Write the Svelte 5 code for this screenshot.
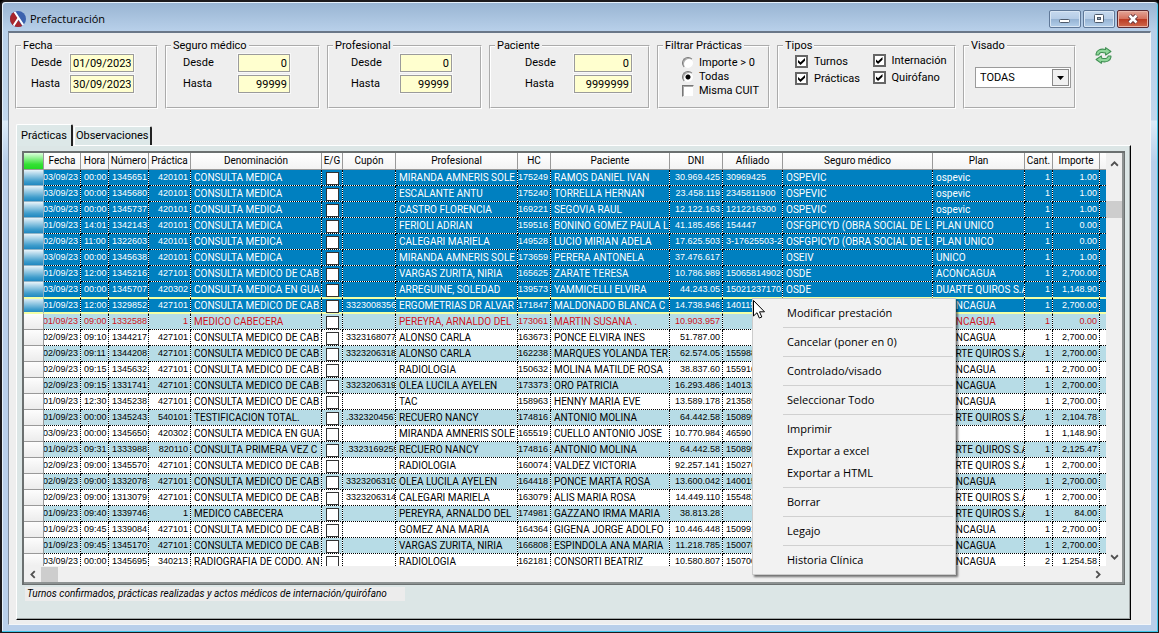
<script>
  const columns = [
    { key: 'fecha', title: 'Fecha', width: 37, kind: 'num date' },
    { key: 'hora', title: 'Hora', width: 28, kind: 'num' },
    { key: 'numero', title: 'Número', width: 40, kind: 'num' },
    { key: 'practica', title: 'Práctica', width: 42, kind: 'num end' },
    { key: 'denominacion', title: 'Denominación', width: 131, kind: 'text' },
    { key: 'eg', title: 'E/G', width: 21, kind: 'check' },
    { key: 'cupon', title: 'Cupón', width: 53, kind: 'num' },
    { key: 'profesional', title: 'Profesional', width: 122, kind: 'text' },
    { key: 'hc', title: 'HC', width: 33, kind: 'num end' },
    { key: 'paciente', title: 'Paciente', width: 119, kind: 'text' },
    { key: 'dni', title: 'DNI', width: 53, kind: 'num end' },
    { key: 'afiliado', title: 'Afiliado', width: 60, kind: 'num' },
    { key: 'seguro', title: 'Seguro médico', width: 150, kind: 'text' },
    { key: 'plan', title: 'Plan', width: 92, kind: 'text' },
    { key: 'cant', title: 'Cant.', width: 28, kind: 'num end' },
    { key: 'importe', title: 'Importe', width: 47, kind: 'num end' }
  ];

  const source = `
03/09/23|00:00|1345651|420101|CONSULTA MEDICA|||MIRANDA AMNERIS SOLE|175249|RAMOS DANIEL IVAN|30.969.425|30969425|OSPEVIC|ospevic|1|1.00
03/09/23|00:00|1345680|420101|CONSULTA MEDICA|||ESCALANTE ANTU|175240|TORRELLA HERNAN|23.458.119|2345811900|OSPEVIC|ospevic|1|1.00
03/09/23|00:00|1345737|420101|CONSULTA MEDICA|||CASTRO FLORENCIA|169221|SEGOVIA RAUL|12.122.163|1212216300|OSPEVIC|ospevic|1|1.00
01/09/23|14:01|1342143|420101|CONSULTA MEDICA|||FERIOLI ADRIAN|159516|BONINO GOMEZ PAULA L|41.185.456|154447|OSFGPICYD (OBRA SOCIAL DE L|PLAN UNICO|1|0.00
02/09/23|11:00|1322603|420101|CONSULTA MEDICA|||CALEGARI MARIELA|149528|LUCIO MIRIAN ADELA|17.625.503|3-17625503-2|OSFGPICYD (OBRA SOCIAL DE L|PLAN UNICO|1|0.00
03/09/23|00:00|1345638|420101|CONSULTA MEDICA|||MIRANDA AMNERIS SOLE|173659|PERERA ANTONELA|37.476.617||OSEIV|UNICO|1|1.00
01/09/23|12:00|1345216|427101|CONSULTA MEDICO DE CAB|||VARGAS ZURITA, NIRIA|165625|ZARATE TERESA|10.786.989|150658149020|OSDE|ACONCAGUA|1|2,700.00
03/09/23|00:00|1345707|420302|CONSULTA MEDICA EN GUA|||ARREGUINE, SOLEDAD|139573|YAMMICELLI ELVIRA|44.243.05|1502123717026|OSDE|DUARTE QUIROS S.A|1|1,148.90
01/09/23|12:00|1329852|427101|CONSULTA MEDICO DE CAB||3323008356|ERGOMETRIAS DR ALVAR|171847|MALDONADO BLANCA C|14.738.946|140115||ACONCAGUA|1|2,700.00
01/09/23|09:00|1332588|1|MEDICO CABECERA|||PEREYRA, ARNALDO DEL|173061|MARTIN SUSANA .|10.903.957|||ACONCAGUA|1|0.00
02/09/23|09:10|1344217|427101|CONSULTA MEDICO DE CAB||3323168077|ALONSO CARLA|163673|PONCE ELVIRA INES|51.787.00|||ACONCAGUA|1|2,700.00
02/09/23|09:11|1344208|427101|CONSULTA MEDICO DE CAB||3323206318|ALONSO CARLA|162238|MARQUES YOLANDA TER|62.574.05|155988||DUARTE QUIROS S.A|1|2,700.00
02/09/23|09:15|1345632|427101|CONSULTA MEDICO DE CAB|||RADIOLOGIA|150632|MOLINA MATILDE ROSA|38.837.60|155916||ACONCAGUA|1|2,700.00
02/09/23|09:15|1331741|427101|CONSULTA MEDICO DE CAB||3323206319|OLEA LUCILA AYELEN|173373|ORO PATRICIA|16.293.486|140132||ACONCAGUA|1|2,700.00
01/09/23|12:30|1345238|427101|CONSULTA MEDICO DE CAB|||TAC|158963|HENNY MARIA EVE|13.589.178|213589||ACONCAGUA|1|2,700.00
01/09/23|00:00|1345243|540101|TESTIFICACION TOTAL.||.3323204567|RECUERO NANCY|174816|ANTONIO MOLINA|64.442.58|150899||DUARTE QUIROS S.A|1|2,104.78
03/09/23|00:00|1345650|420302|CONSULTA MEDICA EN GUA|||MIRANDA AMNERIS SOLE|165519|CUELLO ANTONIO JOSE|10.770.984|46590|||1|1,148.90
01/09/23|09:31|1333988|820110|CONSULTA PRIMERA VEZ C||.3323169259|RECUERO NANCY|174816|ANTONIO MOLINA|64.442.58|150899||DUARTE QUIROS S.A|1|2,125.47
02/09/23|09:00|1345570|427101|CONSULTA MEDICO DE CAB|||RADIOLOGIA|160074|VALDEZ VICTORIA|92.257.141|150276||DUARTE QUIROS S.A|1|2,700.00
02/09/23|09:00|1332078|427101|CONSULTA MEDICO DE CAB||3323206310|OLEA LUCILA AYELEN|164418|PONCE MARTA ROSA|13.600.042|140015||ACONCAGUA|1|2,700.00
02/09/23|09:00|1313079|427101|CONSULTA MEDICO DE CAB||3323206314|CALEGARI MARIELA|163079|ALIS MARIA ROSA|14.449.110|155482||DUARTE QUIROS S.A|1|2,700.00
01/09/23|09:40|1339746|1|MEDICO CABECERA|||PEREYRA, ARNALDO DEL|174981|GAZZANO IRMA MARIA|38.813.28|||DUARTE QUIROS S.A|1|84.00
01/09/23|09:45|1339084|427101|CONSULTA MEDICO DE CAB|||GOMEZ ANA MARIA|164364|GIGENA JORGE ADOLFO|10.446.448|150991||ACONCAGUA|1|2,700.00
01/09/23|09:45|1345170|427101|CONSULTA MEDICO DE CAB|||VARGAS ZURITA, NIRIA|166808|ESPINDOLA ANA MARIA|11.218.785|150078||ACONCAGUA|1|2,700.00
03/09/23|00:00|1345695|340213|RADIOGRAFIA DE CODO. AN|||RADIOLOGIA|162181|CONSORTI BEATRIZ|10.580.807|150700||ACONCAGUA|2|1.254.58`;

  const rows = source.trim().split('\n').map((line) => line.split('|'));
  const current = 8;

  const ranges = [
    { id: 'seguro', title: 'Seguro médico', from: '0', to: '99999' },
    { id: 'profesional', title: 'Profesional', from: '0', to: '99999' },
    { id: 'paciente', title: 'Paciente', from: '0', to: '9999999' }
  ];

  const menu = [
    ['Modificar prestación'],
    ['Cancelar (poner en 0)'],
    ['Controlado/visado'],
    ['Seleccionar Todo'],
    ['Imprimir', 'Exportar a excel', 'Exportar a HTML'],
    ['Borrar'],
    ['Legajo'],
    ['Historia Clínica']
  ];
</script>

<div class="window">
  <header class="titlebar">
    <svg class="logo" viewBox="0 0 16 16" aria-hidden="true">
      <defs><clipPath id="disc"><circle cx="8" cy="8" r="8" /></clipPath></defs>
      <g clip-path="url(#disc)">
        <rect width="16" height="16" fill="#3b62ae" />
        <path d="M0 0H4L9 8L3 16H0Z" fill="#a8262c" />
        <path d="M8 9L13 16H4Z" fill="#a8262c" />
        <path d="M4 0L14.500 16M8.500 7L3 15.500" stroke="#fff" stroke-width="2" fill="none" />
      </g>
    </svg>
    <h1>Prefacturación</h1>
    <div class="buttons">
      <button aria-label="Minimizar"><svg viewBox="0 0 12 10"><rect x=".5" y="5.5" width="10" height="3" rx="1" fill="#fff" stroke="#4d5a6b" /></svg></button>
      <button aria-label="Maximizar"><svg viewBox="0 0 12 10"><rect x="1.5" y=".5" width="9" height="8" rx="1" fill="#fff" stroke="#4d5a6b" /><rect x="4.5" y="3.5" width="3" height="2" fill="#9ab" stroke="#4d5a6b" /></svg></button>
      <button class="close" aria-label="Cerrar"><svg viewBox="0 0 12 10"><path d="M2.5 1.5L9.5 8.5M9.5 1.5L2.5 8.5" stroke="#5b3038" stroke-width="4.4" /><path d="M2.5 1.5L9.5 8.5M9.5 1.5L2.5 8.5" stroke="#fff" stroke-width="2.6" /></svg></button>
    </div>
  </header>

  <main>
    <form class="filters">
      <fieldset class="dates">
        <legend>Fecha</legend>
        <div class="range">
          <label for="fecha-d">Desde</label><input id="fecha-d" value="01/09/2023" />
          <label for="fecha-h">Hasta</label><input id="fecha-h" value="30/09/2023" />
        </div>
      </fieldset>
      {#each ranges as r}
        <fieldset class={r.id}>
          <legend>{r.title}</legend>
          <div class="range">
            <label for="{r.id}-d">Desde</label><input id="{r.id}-d" value={r.from} />
            <label for="{r.id}-h">Hasta</label><input id="{r.id}-h" value={r.to} />
          </div>
        </fieldset>
      {/each}
      <fieldset class="practicas">
        <legend>Filtrar Prácticas</legend>
        <div class="options">
          <label><input type="radio" name="filtro" />Importe &gt; 0</label>
          <label><input type="radio" name="filtro" checked />Todas</label>
          <label><input type="checkbox" />Misma CUIT</label>
        </div>
      </fieldset>
      <fieldset class="tipos">
        <legend>Tipos</legend>
        <div class="pair">
          <div class="stack low">
            <label><input type="checkbox" class="tick" checked />Turnos</label>
            <label><input type="checkbox" class="tick" checked />Prácticas</label>
          </div>
          <div class="stack">
            <label><input type="checkbox" class="tick" checked />Internación</label>
            <label><input type="checkbox" class="tick" checked />Quirófano</label>
          </div>
        </div>
      </fieldset>
      <fieldset class="visado">
        <legend>Visado</legend>
        <div class="combo">
          <select aria-label="Visado"><option>TODAS</option></select>
          <span class="drop"><svg viewBox="0 0 7 4"><path d="M0 0H7L3.5 4Z" /></svg></span>
        </div>
      </fieldset>
      <button type="button" class="refresh" aria-label="Actualizar">
        <svg viewBox="0 0 16 16" stroke="#3f8f52" stroke-width="1" stroke-linejoin="round" fill="#8fd79a">
          <path d="M1 6.5C1.5 3 5 1.2 10 2.4V.6L15 4.2L10 7.6V5.6C6.5 4.6 4 5 3.6 7.5H1Z" />
          <path d="M15 9.5C14.500 13 11 14.800 6 13.600V15.400L1 11.800L6 8.400V10.400C9.500 11.400 12 11 12.400 8.500H15Z" />
        </svg>
      </button>
    </form>

    <div class="tabs" role="tablist">
      <button role="tab" aria-selected="true" class="tab active">Prácticas</button>
      <button role="tab" aria-selected="false" class="tab">Observaciones</button>
    </div>

    <section class="page">
      <div class="grid">
        <div class="view">
          <table>
            <colgroup>
              <col style="width: 20px" />
              {#each columns as c}<col style="width: {c.width}px" />{/each}
              <col />
            </colgroup>
            <thead>
              <tr>
                <th class="corner"></th>
                {#each columns as c}<th>{c.title}</th>{/each}
                <th class="rest"></th>
              </tr>
            </thead>
            <tbody>
              {#each rows as row, i}
                <tr class:selected={i <= current} class:current={i === current} class:above={i === current - 1} class:even={i % 2 === 1} class:alert={i === 9}>
                  <td class="handle"></td>
                  {#each columns as c, j}
                    <td>
                      {#if c.kind === 'check'}
                        <input type="checkbox" class="mark" aria-label="E/G {row[2]}" />
                      {:else}
                        <div class="cell {c.kind}">{row[j]}</div>
                      {/if}
                    </td>
                  {/each}
                  <td class="rest"></td>
                </tr>
              {/each}
            </tbody>
          </table>
        </div>
        <div class="vbar">
          <svg viewBox="0 0 8 6"><path d="M1 5L4 2L7 5" /></svg>
          <i></i>
          <svg class="last" viewBox="0 0 8 6"><path d="M1 1L4 4L7 1" /></svg>
        </div>
        <div class="hbar">
          <svg viewBox="0 0 6 8"><path d="M5 1L2 4L5 7" /></svg>
          <i></i>
          <svg class="last" viewBox="0 0 6 8"><path d="M1 1L4 4L1 7" /></svg>
        </div>
      </div>
      <p class="status">Turnos confirmados, prácticas realizadas y actos médicos de internación/quirófano</p>
    </section>
  </main>

  <div class="menu" role="menu">
    {#each menu as group, g}
      {#if g > 0}<hr />{/if}
      {#each group as item}<button role="menuitem">{item}</button>{/each}
    {/each}
  </div>
  <svg class="pointer" viewBox="0 0 12 19" aria-hidden="true">
    <path d="M.5 .5V16L4 12.700L6.300 18L8.800 17L6.500 11.800H11.500Z" fill="#fff" stroke="#000" />
  </svg>
</div>

<style>
  :global(body) { margin: 0; background: #000; }
  * { box-sizing: border-box; }
  .window {
    position: relative;
    display: flex;
    flex-direction: column;
    height: 100vh;
    min-height: 400px;
    padding: 0 7px 7px 6px;
    border: solid #1c1a1c;
    border-width: 2px 1px 1px 2px;
    border-radius: 5px 5px 0 0;
    background: linear-gradient(#98b4d2, #b7cfe9 28px, #c2d7ed 118px, #dcebf8 119px, #b9cfea 160px);
    box-shadow: inset -1px -1px #3fc6ea, inset 1px 1px #e6f1fb;
    font: 11px/14px Roboto, "Liberation Sans", Arial, sans-serif;
    color: #000;
    overflow: hidden;
  }
  button, input, select { font: inherit; color: inherit; margin: 0; padding: 0; border: 0; background: none; border-radius: 0; }
  .titlebar { display: flex; align-items: center; height: 29px; padding: 5px 0 0 2px; flex: none; }
  .logo { width: 16px; height: 16px; }
  h1 { margin: 0 auto 0 4px; font: 11px/16px "Open Sans", sans-serif; }
  .buttons { display: flex; gap: 2px; align-self: flex-start; padding: 3px 2px 0 0; }
  .buttons button {
    display: grid; place-items: center; width: 32px; height: 18px;
    border: 1px solid #5f7898; border-radius: 2px;
    background: linear-gradient(#c6d9ee, #b5cce6 50%, #95b3d3 51%, #b4cfea);
    box-shadow: inset 0 0 0 1px #d8e6f4;
  }
  .buttons svg { width: 12px; height: 10px; }
  .buttons .close { border-color: #5b2b33; background: linear-gradient(#e2a597, #d5705c 50%, #bb3a22 51%, #cf6a4e); box-shadow: inset 0 0 0 1px #eab5a8; }
  main {
    flex: 1; min-height: 0; display: flex; flex-direction: column;
    padding: 6px 19px 4px 7px;
    border: 1px solid #f4f6f8; border-top: 2px solid #6a7788; border-left-color: #7f8a98;
    background: #eee;
  }
  .filters { display: flex; gap: 7px; align-items: flex-start; margin-left: -1px; }
  fieldset { margin: 0; min-width: 0; height: 70px; padding: 0 4px; flex: none; border: 2px groove #fff; }
  legend { padding: 0 2px; line-height: 14px; }
  .dates { width: 143px; }
  .seguro, .profesional { width: 155px; }
  .paciente { width: 161px; }
  .practicas, .visado { width: 113px; }
  .tipos { width: 179px; }
  .range { display: grid; grid-template-columns: 1fr 52px; gap: 3px 0; padding: 1px 24px 0 12px; }
  .range label { line-height: 18px; }
  .dates .range { grid-template-columns: 1fr 64px; padding: 1px 18px 0 10px; }
  .profesional .range { padding-left: 18px; }
  .paciente .range { grid-template-columns: 1fr 58px; padding: 1px 12px 0 30px; }
  .range input { width: 100%; height: 18px; padding: 0 2px; border: 1px solid #9b9b9b; background: #ffffcf; text-align: right; outline: 1px solid #f8f8f8; }
  .options { padding: 3px 0 0 19px; }
  .options label { display: flex; align-items: center; gap: 5px; height: 14px; }
  .options input { appearance: none; width: 12px; height: 12px; background: #fff; border: 1px solid; border-color: #777 #eee #eee #777; box-shadow: inset 1px 1px #aaa; }
  .options input[type='radio'] { border-radius: 50%; }
  .options input[type='radio']:checked { background: radial-gradient(circle, #000 2px, #fff 3px); }
  .pair { display: flex; padding-left: 12px; }
  .stack { width: 78px; }
  .low { padding-top: 1px; }
  .stack label { display: flex; align-items: center; gap: 6px; height: 17px; margin-top: -1px; margin-bottom: 1px; white-space: nowrap; }
  .tick { appearance: none; display: grid; place-items: center; width: 13px; height: 13px; border: 2px solid #666; background: #fff; flex: none; }
  .tick:checked::before { content: ''; width: 7px; height: 7px; background: #000; clip-path: polygon(0 30%, 36% 62%, 100% 0, 100% 38%, 36% 100%, 0 66%); }
  .combo { position: relative; display: flex; margin: 14px 0 0 6px; width: 96px; height: 21px; border: 1px solid #9b9b9b; background: #fff; }
  .combo select { appearance: none; width: 100%; padding-left: 4px; }
  .drop { position: absolute; inset: 1px 1px 1px auto; width: 17px; display: grid; place-items: center; border: 1px solid #888; background: #f0f0f0; pointer-events: none; }
  .drop svg { width: 7px; height: 4px; }
  .refresh { margin: 8px 0 0 12px; height: 17px; }
  .refresh svg { display: block; width: 17px; height: 17px; }
  .tabs { display: flex; align-items: flex-end; gap: 1px; height: 21px; margin-top: 15px; flex: none; }
  .tab { height: 19px; padding: 0 1px; border: 1px solid #fff; border-right: 2px solid #222; border-bottom: 0; background: #dde8e8; border-radius: 2px 2px 0 0; }
  .tab.active { height: 22px; padding: 0 4px; margin-bottom: -1px; z-index: 1; }
  .page {
    flex: 1; min-height: 0; display: flex; flex-direction: column;
    padding: 5px 5px 0;
    border: 1px solid #fff; border-right-color: #000; border-bottom-color: #000;
    box-shadow: inset -1px -1px #a0a6a6;
    background: #dce6e6;
  }
  .grid {
    flex: 1; min-height: 0; display: grid;
    grid-template: minmax(0, 1fr) 18px / minmax(0, 1fr) 18px;
    border: 2px groove #c4caca;
    border-color: #6b7070;
    border-style: solid;
    border-right-width: 1px; border-bottom-width: 1px;
    background: #f0f0f0;
    box-shadow: inset -2px -2px #8d9292;
  }
  .view { overflow: hidden; background: #fff; }
  table { width: 100%; table-layout: fixed; border-collapse: separate; border-spacing: 0; font-size: 10px; line-height: 15px; }
  th { height: 17px; padding: 0; border: solid #999; border-width: 0 1px 1px 0; background: linear-gradient(#fff, #f3f3f3); font-weight: normal; line-height: 16px; white-space: nowrap; overflow: hidden; }
  .corner { background: linear-gradient(#dcffdc, #35e135 70%, #23d923); }
  td { height: 16px; padding: 0; border: 1px dotted #000; border-width: 0 1px 1px 0; background: #fff padding-box; overflow: hidden; }
  .rest { border-right: 0; }
  .cell { display: flex; height: 15px; padding: 0 0 0 3px; white-space: pre; overflow: hidden; }
  .num { font-family: "Liberation Sans", Arial, sans-serif; font-size: 9px; }
  .end { justify-content: flex-end; padding: 0 2px 0 0; }
  .date { justify-content: flex-end; padding: 0 2px 0 0; }
  .even td { background-color: #b7dce6; }
  .alert td { color: #d0141e; }
  .selected td { background-color: #0080c0; color: #fff; }
  .above td, .current td { border-bottom: 1px solid #f3ffa6; }
  .current td { box-shadow: inset 0 1px #f3ffa6, inset 0 -1px #f3ffa6; }
  tr .handle { border: solid #999; border-width: 0 1px 1px 0; background: linear-gradient(#fdfdfd, #ececec); }
  tr.selected .handle { background: linear-gradient(#e8f3f9, #3f9dcc 75%, #2088c0); border-color: #8fb4c8; }
  tr.above .handle, tr.current .handle { border-bottom-color: #f3ffa6; }
  .mark { appearance: none; display: block; width: 13px; height: 13px; margin: 2px 0 0 4px; border: 1px solid #333; background: #fff; }
  .vbar, .hbar { display: flex; align-items: center; }
  .vbar { flex-direction: column; padding: 7px 2px 5px 0; }
  .vbar svg { width: 9px; height: 7px; }
  .hbar svg { width: 7px; height: 9px; }
  .vbar path, .hbar path { fill: none; stroke: #505050; stroke-width: 1.6; }
  .vbar i { width: 16px; height: 17px; margin-top: 34px; background: #cdcdcd; }
  .hbar { padding: 0 4px 2px 5px; }
  .hbar i { width: 17px; height: 15px; margin-left: 5px; background: #cdcdcd; }
  .vbar .last { margin-top: auto; }
  .hbar .last { margin-left: auto; }
  .status { width: 380px; margin: 2px 0 18px 3px; padding-left: 2px; background: #ececec; font-size: 10px; line-height: 14px; font-style: italic; white-space: nowrap; flex: none; }
  .menu {
    position: absolute; left: 750px; top: 296px; width: 204px; padding: 3px 2px;
    border: 1px solid #ccc; background: #f2f2f2; box-shadow: 2px 2px 2px #0008;
    font: 11px/22px "Open Sans", sans-serif;
  }
  .menu button { display: block; width: 100%; height: 22px; padding-left: 32px; text-align: left; }
  .menu hr { height: 1px; margin: 3px 0 3px 28px; border: 0; background: #d0d0d0; }
  .pointer { position: absolute; left: 751px; top: 298px; width: 12px; height: 19px; }
</style>
